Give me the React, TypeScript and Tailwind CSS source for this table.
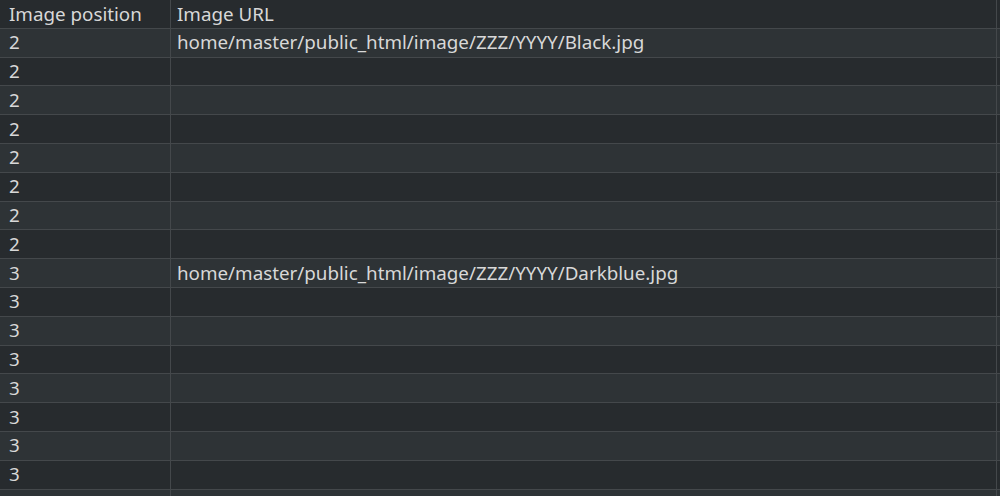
const ROWS: { pos: string; url: string }[] = [
  { pos: "2", url: "home/master/public_html/image/ZZZ/YYYY/Black.jpg" },
  { pos: "2", url: "" },
  { pos: "2", url: "" },
  { pos: "2", url: "" },
  { pos: "2", url: "" },
  { pos: "2", url: "" },
  { pos: "2", url: "" },
  { pos: "2", url: "" },
  { pos: "3", url: "home/master/public_html/image/ZZZ/YYYY/Darkblue.jpg" },
  { pos: "3", url: "" },
  { pos: "3", url: "" },
  { pos: "3", url: "" },
  { pos: "3", url: "" },
  { pos: "3", url: "" },
  { pos: "3", url: "" },
  { pos: "3", url: "" },
  { pos: "3", url: "" },
];

function Row({ a, b, light }: { a: string; b: string; light?: boolean }) {
  return (
    <div
      className={`flex h-[28.8px] border-b border-[#44484b] ${light ? "bg-[#2e3336]" : "bg-[#272b2e]"}`}
    >
      <div className="flex w-[171px] shrink-0 items-center border-r border-[#44484b] pl-[9px]">
        {a}
      </div>
      <div className="flex w-[826px] shrink-0 items-center border-r border-[#44484b] pl-[6px]">
        {b}
      </div>
    </div>
  );
}

export default function App() {
  return (
    <main className="h-[496px] w-[1000px] overflow-hidden bg-[#272b2e] font-['Noto_Sans',sans-serif] text-[18.8px] leading-none text-[#d8d8d8]">
      <Row a="Image position" b="Image URL" />
      {ROWS.map((r, i) => (
        <Row key={i} a={r.pos} b={r.url} light={i % 2 === 0} />
      ))}
    </main>
  );
}
